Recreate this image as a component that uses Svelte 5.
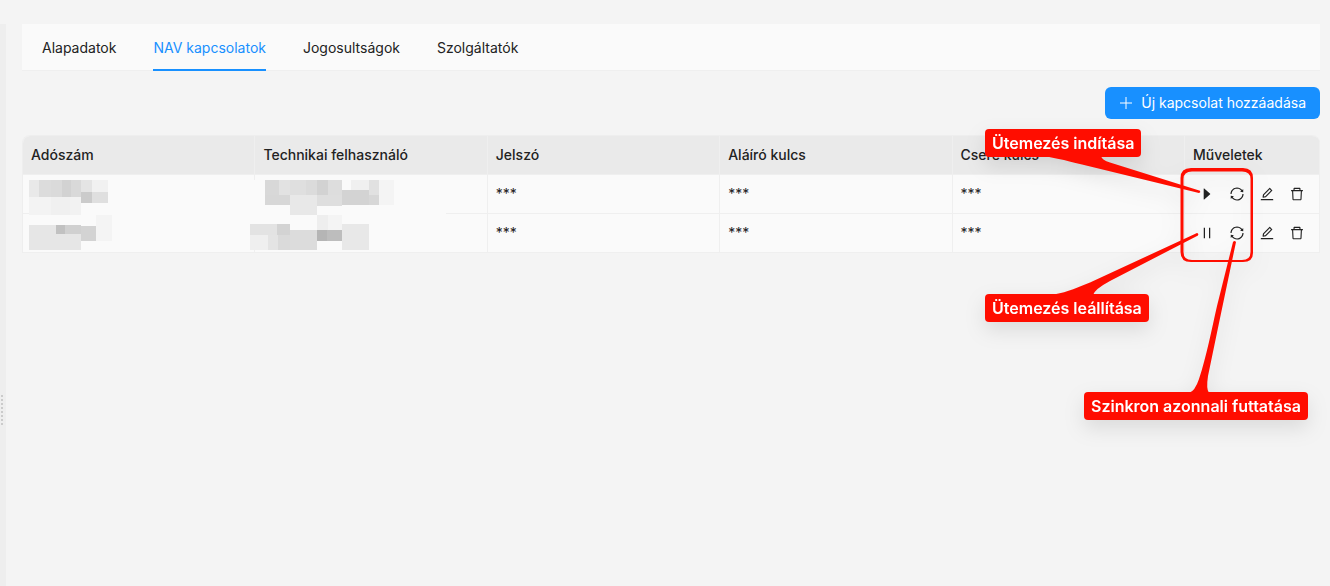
<script lang="ts">
  type Action = 'play' | 'pause' | 'sync' | 'edit' | 'remove';

  type Connection = {
    id: number;
    password: string;
    signKey: string;
    changeKey: string;
    actions: Action[];
  };

  const tabs = ['Alapadatok', 'NAV kapcsolatok', 'Jogosultságok', 'Szolgáltatók'];
  const columns = ['Adószám', 'Technikai felhasználó', 'Jelszó', 'Aláíró kulcs', 'Csere kulcs', 'Műveletek'];

  const connections: Connection[] = [
    { id: 1, password: '***', signKey: '***', changeKey: '***', actions: ['play', 'sync', 'edit', 'remove'] },
    { id: 2, password: '***', signKey: '***', changeKey: '***', actions: ['pause', 'sync', 'edit', 'remove'] },
  ];

  const labels = {
    play: 'Ütemezés indítása',
    pause: 'Ütemezés leállítása',
    sync: 'Szinkron azonnali futtatása',
    edit: 'Szerkesztés',
    remove: 'Törlés',
  };

  const icons = {
    play: 'M715.8 493.5L335 165.1c-14.2-12.2-35-1.2-35 18.5v656.8c0 19.7 20.8 30.7 35 18.5l380.8-328.4c10.9-9.4 10.9-27.6 0-37z',
    pause: 'M304 176h80v672h-80zm408 0h-64c-4.4 0-8 3.6-8 8v656c0 4.4 3.6 8 8 8h64c4.4 0 8-3.6 8-8V184c0-4.4-3.6-8-8-8z',
    sync: 'M168 504.2c1-43.7 10-86.1 26.9-126 17.3-41 42.1-77.7 73.7-109.4S337 212.3 378 195c42.4-17.9 87.4-27 133.9-27s91.5 9.1 133.8 27A341.5 341.5 0 01755 268.8c9.9 9.9 19.2 20.4 27.8 31.4l-60.2 47a8 8 0 003 14.1l175.7 43c5 1.2 9.9-2.6 9.9-7.7l.8-180.9c0-6.7-7.7-10.5-12.9-6.3l-56.4 44.1C765.8 155.1 646.2 92 511.8 92 282.7 92 96.3 275.6 92 503.8a8 8 0 008 8.2h60c4.4 0 7.9-3.5 8-7.8zm756 7.8h-60c-4.4 0-7.9 3.5-8 7.8-1 43.7-10 86.1-26.9 126-17.3 41-42.1 77.8-73.7 109.4A342.45 342.45 0 01512.1 856a342.24 342.24 0 01-243.2-100.8c-9.9-9.9-19.2-20.4-27.8-31.4l60.2-47a8 8 0 00-3-14.1l-175.7-43c-5-1.2-9.9 2.6-9.9 7.7l-.7 181c0 6.7 7.7 10.5 12.9 6.3l56.4-44.1C258.2 868.9 377.8 932 512.2 932c229.2 0 415.5-183.7 419.8-411.8a8 8 0 00-8-8.2z',
    edit: 'M257.7 752c2 0 4-.2 6-.5L431.9 722c2-.4 3.9-1.3 5.3-2.8l423.9-423.9a9.96 9.96 0 000-14.1L694.9 114.9c-1.9-1.9-4.4-2.9-7.1-2.9s-5.2 1-7.1 2.9L256.8 538.8c-1.5 1.5-2.4 3.3-2.8 5.3l-29.5 168.2a33.5 33.5 0 009.4 29.8c6.6 6.4 14.9 9.9 23.8 9.9zm67.4-174.4L687.8 215l73.3 73.3-362.7 362.6-88.9 15.7 15.6-89zM880 836H144c-17.7 0-32 14.3-32 32v36c0 4.4 3.6 8 8 8h784c4.4 0 8-3.6 8-8v-36c0-17.7-14.3-32-32-32z',
    remove: 'M360 184h-8c4.4 0 8-3.6 8-8v8h304v-8c0 4.4 3.6 8 8 8h-8v72h72v-80c0-35.3-28.7-64-64-64H352c-35.3 0-64 28.7-64 64v80h72v-72zm504 72H160c-17.7 0-32 14.3-32 32v32c0 4.4 3.6 8 8 8h60.4l24.7 523c1.6 34.1 29.8 61 63.9 61h454c34.2 0 62.3-26.8 63.9-61l24.7-523H888c4.4 0 8-3.6 8-8v-32c0-17.7-14.3-32-32-32zM731.3 840H292.7l-24.2-512h487l-24.2 512z',
  };

  // pixelated blocks over the private data: x, y, width, height, colour
  const mosaic: [number, number, number, number, string][] = [
    [7, 76, 417, 3, '#fafafa'],
    [228, 44, 14, 70, '#fafafa'],
    [7, 44, 10, 17, '#e9e9e9'],
    [17, 44, 12, 17, '#dcdcdc'],
    [29, 44, 11, 17, '#dadada'],
    [40, 44, 9, 17, '#d2d2d2'],
    [49, 44, 10, 17, '#d9d9d9'],
    [59, 44, 11, 12, '#e4e4e4'],
    [70, 44, 16, 12, '#f1f1f1'],
    [59, 56, 11, 11, '#cbcbcb'],
    [70, 56, 16, 11, '#dfdfdf'],
    [7, 61, 22, 18, '#f3f3f3'],
    [29, 61, 19, 18, '#f0f0f0'],
    [48, 61, 11, 18, '#f2f2f2'],
    [7, 89, 52, 25, '#e6e6e6'],
    [34, 89, 9, 9, '#c1c1c1'],
    [43, 89, 16, 9, '#d0d0d0'],
    [59, 90, 15, 15, '#d3d3d3'],
    [74, 79, 16, 26, '#f4f4f4'],
    [243, 44, 14, 15, '#d8d8d8'],
    [257, 44, 11, 15, '#e2e2e2'],
    [268, 44, 16, 15, '#dfdfdf'],
    [284, 44, 11, 15, '#dbdbdb'],
    [295, 44, 11, 15, '#d2d2d2'],
    [306, 44, 14, 15, '#dddddd'],
    [329, 44, 18, 10, '#f0f0f0'],
    [347, 44, 10, 15, '#e1e1e1'],
    [357, 44, 15, 25, '#f4f4f4'],
    [243, 59, 25, 10, '#d7d7d7'],
    [268, 59, 27, 20, '#e8e8e8'],
    [295, 59, 25, 11, '#dedede'],
    [320, 54, 27, 15, '#d3d3d3'],
    [347, 59, 10, 10, '#d7d7d7'],
    [228, 88, 27, 11, '#e3e3e3'],
    [255, 88, 13, 11, '#d3d3d3'],
    [228, 99, 18, 15, '#efefef'],
    [246, 99, 10, 15, '#e4e4e4'],
    [256, 99, 12, 15, '#dadada'],
    [268, 94, 27, 20, '#dcdcdc'],
    [295, 94, 10, 11, '#b5b5b5'],
    [305, 94, 15, 11, '#bdbdbd'],
    [320, 88, 27, 26, '#e8e8e8'],
    [295, 79, 11, 15, '#eeeeee'],
    [306, 79, 14, 15, '#f4f4f4'],
  ];

  let active = $state(1);
</script>

<div class="page">
  <div class="splitter">
    {#each Array(8) as _}
      <i></i>
    {/each}
  </div>

  <main>
    <div class="tabs" role="tablist">
      {#each tabs as tab, i}
        <button role="tab" class:active={i === active} aria-selected={i === active} onclick={() => (active = i)}>{tab}</button>
      {/each}
    </div>

    <div class="toolbar">
      <button class="primary">
        <svg width="14" height="14" viewBox="0 0 14 14" aria-hidden="true">
          <path d="M7 1v12M1 7h12" stroke="currentColor" stroke-width="1" />
        </svg>
        Új kapcsolat hozzáadása
      </button>
    </div>

    <div class="table-wrap">
      <table>
        <thead>
          <tr>
            {#each columns as column}
              <th>{column}</th>
            {/each}
          </tr>
        </thead>
        <tbody>
          {#each connections as row (row.id)}
            <tr>
              <td></td>
              <td></td>
              <td>{row.password}</td>
              <td>{row.signKey}</td>
              <td>{row.changeKey}</td>
              <td>
                <div class="actions">
                  {#each row.actions as action}
                    <button aria-label={labels[action]}>
                      <svg width="16" height="16" viewBox="0 0 1024 1024" aria-hidden="true">
                        <path d={icons[action]} fill="currentColor" />
                      </svg>
                    </button>
                  {/each}
                </div>
              </td>
            </tr>
          {/each}
        </tbody>
      </table>
      <svg class="mosaic" width="430" height="116" shape-rendering="crispEdges" aria-hidden="true">
        {#each mosaic as [x, y, width, height, fill]}
          <rect {x} {y} {width} {height} {fill} />
        {/each}
      </svg>
    </div>
  </main>

  <div class="callouts">
    <svg width="360" height="440" viewBox="970 0 360 440" aria-hidden="true">
      <g fill="#ff0d00">
        <path fill-rule="evenodd" d="M1191 168H1243Q1253 168 1253 178V253Q1253 262 1243 262H1191Q1180.500 262 1180.500 252V178Q1180.500 168 1191 168ZM1192 171.500Q1183.500 171.500 1183.500 179V252Q1183.500 260 1192 260H1242Q1250.500 260 1250.500 252V179Q1250.500 171.500 1242 171.500Z" />
        <path d="M1040 156C1052 157 1064 160 1082 164.500L1199 193Q1201 192.500 1200 190.800L1110 162.500Q1102 160 1101 156Z" />
        <path d="M1050 295C1064 293 1072 290 1090 282.500L1197 233Q1199 233.500 1198 235.500L1110 281Q1095 289 1093 295Z" />
        <path d="M1189 393Q1195 391 1199 379C1206 358 1212 328 1217 306L1233 242Q1234.500 240 1236 242L1219 323L1208 376Q1206 389 1209 393Z" />
      </g>
    </svg>
    <span class="callout start">Ütemezés indítása</span>
    <span class="callout stop">Ütemezés leállítása</span>
    <span class="callout run">Szinkron azonnali futtatása</span>
  </div>
</div>

<style>
  :global(body) {
    margin: 0;
    background: #f4f4f4;
  }

  .page {
    position: relative;
    display: flex;
    gap: 16px;
    box-sizing: border-box;
    min-height: 100vh;
    padding: 24px 10px 0 0;
    font-family: Inter, "Liberation Sans", sans-serif;
    font-size: 14px;
    line-height: 22px;
    color: #222;
  }

  button {
    padding: 0;
    border: 0;
    background: none;
    font: inherit;
    color: inherit;
    cursor: pointer;
  }

  .splitter {
    display: flex;
    flex-direction: column;
    justify-content: center;
    gap: 2px;
    padding: 210px 0 0 1px;
    box-sizing: border-box;
    flex: 0 0 6px;
    background: #eeeeee;
  }

  .splitter i {
    width: 2px;
    height: 2px;
    background: #cbcbcb;
  }

  main {
    flex: 1;
    min-width: 0;
  }

  .tabs {
    display: flex;
    gap: 37px;
    padding: 0 20px;
    background: #fafafa;
    box-shadow: inset 0 -1px #efefef;
  }

  .tabs button {
    height: 47px;
    border-top: 2px solid transparent;
    border-bottom: 2px solid transparent;
  }

  .tabs button.active {
    color: #1890ff;
    border-bottom-color: #1890ff;
  }

  .toolbar {
    display: flex;
    justify-content: flex-end;
    padding: 16px 0;
  }

  .primary {
    display: flex;
    align-items: center;
    gap: 8px;
    height: 32px;
    padding: 0 14px;
    border-radius: 6px;
    background: #1890ff;
    color: #fff;
  }

  .table-wrap {
    position: relative;
  }

  table {
    width: 100%;
    table-layout: fixed;
    border-collapse: separate;
    border-spacing: 0;
    border: 1px solid #eeeeee;
    border-width: 1px 0 0 1px;
    border-radius: 8px 8px 0 0;
    background: #fafafa;
    overflow: hidden;
  }

  th,
  td {
    box-sizing: border-box;
    height: 39px;
    padding: 0 8px;
    border-right: 1px solid #efefef;
    border-bottom: 1px solid #efefef;
    text-align: left;
  }

  th {
    background: #eaeaea;
    font-weight: 500;
  }

  th:last-child {
    width: 135px;
  }

  td:last-child {
    padding: 0 7px;
  }

  .actions {
    display: flex;
  }

  .actions button {
    display: flex;
    flex: none;
    align-items: center;
    justify-content: center;
    width: 30px;
    height: 30px;
  }

  .mosaic {
    position: absolute;
    top: 1px;
    left: 0;
  }

  .callouts {
    position: absolute;
    top: 0;
    right: 0;
    width: 360px;
    height: 440px;
    filter: drop-shadow(0 8px 10px rgba(0, 0, 0, 0.1));
    pointer-events: none;
  }

  .callouts svg {
    display: block;
  }

  .callout {
    position: absolute;
    padding: 0 7px;
    border-radius: 4px;
    background: #ff0d00;
    color: #fff;
    font-size: 16px;
    font-weight: 600;
    line-height: 28px;
    white-space: nowrap;
  }

  .start {
    top: 129px;
    left: 15px;
  }

  .stop {
    top: 294px;
    left: 15px;
  }

  .run {
    top: 392px;
    left: 114px;
  }
</style>
